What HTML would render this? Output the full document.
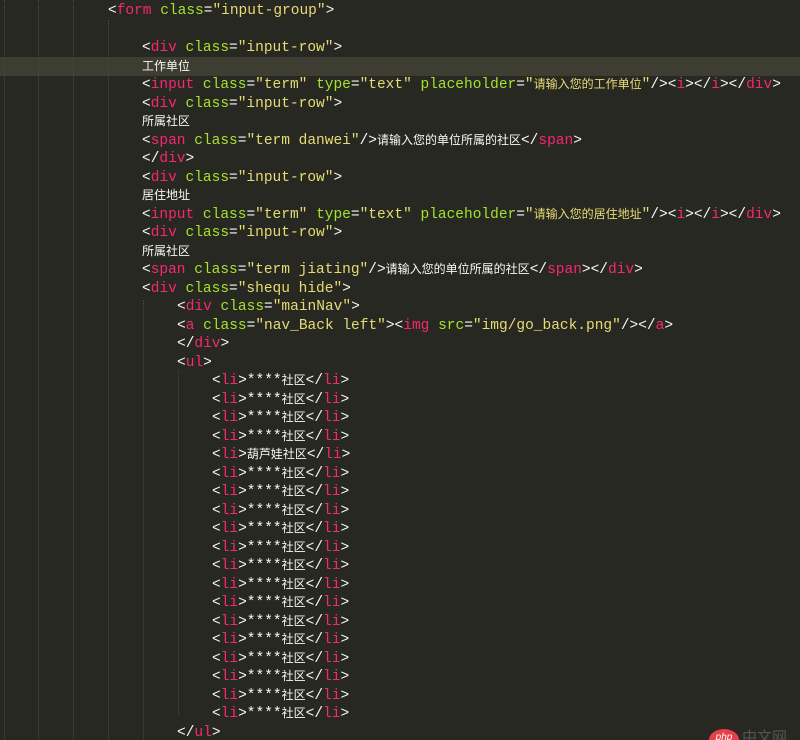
<!DOCTYPE html>
<html style="height:740px;overflow:hidden"><head><meta charset="utf-8"><style>
body{margin:0;width:800px;height:740px;background:#272822;overflow:hidden;position:relative;font-family:"Liberation Mono",monospace;font-size:14.5px;color:#f8f8f2}
.g{position:absolute;top:0;height:740px;border-left:1px dotted #4a4a42}
.hl{position:absolute;left:0;top:57px;width:800px;height:18.5px;background:#3e3d32}
.c{position:absolute;left:0;top:2px;width:800px}
.l{height:18.5px;line-height:18.5px;white-space:pre;position:relative;overflow:hidden}
.t{color:#f92672}.a{color:#a6e22e}.s{color:#e6db74}
.z{font-family:"Noto Sans CJK SC",sans-serif;font-size:12px;line-height:12px;vertical-align:0}
</style></head><body>
<div class="hl"></div>
<div class="g" style="left:4px"></div><div class="g" style="left:38px"></div><div class="g" style="left:73px"></div>
<div class="g" style="left:108px;top:20px;height:720px"></div><div class="g" style="left:143px;top:300px;height:440px"></div><div class="g" style="left:178px;top:370px;height:345px"></div>
<div class="c">
<div class="l" style="padding-left:108px">&lt;<span class="t">form</span> <span class="a">class</span>=<span class="s">"input-group"</span>&gt;</div>
<div class="l"></div>
<div class="l" style="padding-left:142px">&lt;<span class="t">div</span> <span class="a">class</span>=<span class="s">"input-row"</span>&gt;</div>
<div class="l" style="padding-left:142px"><span class="z">工作单位</span></div>
<div class="l" style="padding-left:142px">&lt;<span class="t">input</span> <span class="a">class</span>=<span class="s">"term"</span> <span class="a">type</span>=<span class="s">"text"</span> <span class="a">placeholder</span>=<span class="s">"<span class="z">请输入您的工作单位</span>"</span>/&gt;&lt;<span class="t">i</span>&gt;&lt;/<span class="t">i</span>&gt;&lt;/<span class="t">div</span>&gt;</div>
<div class="l" style="padding-left:142px">&lt;<span class="t">div</span> <span class="a">class</span>=<span class="s">"input-row"</span>&gt;</div>
<div class="l" style="padding-left:142px"><span class="z">所属社区</span></div>
<div class="l" style="padding-left:142px">&lt;<span class="t">span</span> <span class="a">class</span>=<span class="s">"term danwei"</span>/&gt;<span class="z">请输入您的单位所属的社区</span>&lt;/<span class="t">span</span>&gt;</div>
<div class="l" style="padding-left:142px">&lt;/<span class="t">div</span>&gt;</div>
<div class="l" style="padding-left:142px">&lt;<span class="t">div</span> <span class="a">class</span>=<span class="s">"input-row"</span>&gt;</div>
<div class="l" style="padding-left:142px"><span class="z">居住地址</span></div>
<div class="l" style="padding-left:142px">&lt;<span class="t">input</span> <span class="a">class</span>=<span class="s">"term"</span> <span class="a">type</span>=<span class="s">"text"</span> <span class="a">placeholder</span>=<span class="s">"<span class="z">请输入您的居住地址</span>"</span>/&gt;&lt;<span class="t">i</span>&gt;&lt;/<span class="t">i</span>&gt;&lt;/<span class="t">div</span>&gt;</div>
<div class="l" style="padding-left:142px">&lt;<span class="t">div</span> <span class="a">class</span>=<span class="s">"input-row"</span>&gt;</div>
<div class="l" style="padding-left:142px"><span class="z">所属社区</span></div>
<div class="l" style="padding-left:142px">&lt;<span class="t">span</span> <span class="a">class</span>=<span class="s">"term jiating"</span>/&gt;<span class="z">请输入您的单位所属的社区</span>&lt;/<span class="t">span</span>&gt;&lt;/<span class="t">div</span>&gt;</div>
<div class="l" style="padding-left:142px">&lt;<span class="t">div</span> <span class="a">class</span>=<span class="s">"shequ hide"</span>&gt;</div>
<div class="l" style="padding-left:177px">&lt;<span class="t">div</span> <span class="a">class</span>=<span class="s">"mainNav"</span>&gt;</div>
<div class="l" style="padding-left:177px">&lt;<span class="t">a</span> <span class="a">class</span>=<span class="s">"nav_Back left"</span>&gt;&lt;<span class="t">img</span> <span class="a">src</span>=<span class="s">"img/go_back.png"</span>/&gt;&lt;/<span class="t">a</span>&gt;</div>
<div class="l" style="padding-left:177px">&lt;/<span class="t">div</span>&gt;</div>
<div class="l" style="padding-left:177px">&lt;<span class="t">ul</span>&gt;</div>
<div class="l" style="padding-left:212px">&lt;<span class="t">li</span>&gt;****<span class="z">社区</span>&lt;/<span class="t">li</span>&gt;</div>
<div class="l" style="padding-left:212px">&lt;<span class="t">li</span>&gt;****<span class="z">社区</span>&lt;/<span class="t">li</span>&gt;</div>
<div class="l" style="padding-left:212px">&lt;<span class="t">li</span>&gt;****<span class="z">社区</span>&lt;/<span class="t">li</span>&gt;</div>
<div class="l" style="padding-left:212px">&lt;<span class="t">li</span>&gt;****<span class="z">社区</span>&lt;/<span class="t">li</span>&gt;</div>
<div class="l" style="padding-left:212px">&lt;<span class="t">li</span>&gt;<span class="z">葫芦娃社区</span>&lt;/<span class="t">li</span>&gt;</div>
<div class="l" style="padding-left:212px">&lt;<span class="t">li</span>&gt;****<span class="z">社区</span>&lt;/<span class="t">li</span>&gt;</div>
<div class="l" style="padding-left:212px">&lt;<span class="t">li</span>&gt;****<span class="z">社区</span>&lt;/<span class="t">li</span>&gt;</div>
<div class="l" style="padding-left:212px">&lt;<span class="t">li</span>&gt;****<span class="z">社区</span>&lt;/<span class="t">li</span>&gt;</div>
<div class="l" style="padding-left:212px">&lt;<span class="t">li</span>&gt;****<span class="z">社区</span>&lt;/<span class="t">li</span>&gt;</div>
<div class="l" style="padding-left:212px">&lt;<span class="t">li</span>&gt;****<span class="z">社区</span>&lt;/<span class="t">li</span>&gt;</div>
<div class="l" style="padding-left:212px">&lt;<span class="t">li</span>&gt;****<span class="z">社区</span>&lt;/<span class="t">li</span>&gt;</div>
<div class="l" style="padding-left:212px">&lt;<span class="t">li</span>&gt;****<span class="z">社区</span>&lt;/<span class="t">li</span>&gt;</div>
<div class="l" style="padding-left:212px">&lt;<span class="t">li</span>&gt;****<span class="z">社区</span>&lt;/<span class="t">li</span>&gt;</div>
<div class="l" style="padding-left:212px">&lt;<span class="t">li</span>&gt;****<span class="z">社区</span>&lt;/<span class="t">li</span>&gt;</div>
<div class="l" style="padding-left:212px">&lt;<span class="t">li</span>&gt;****<span class="z">社区</span>&lt;/<span class="t">li</span>&gt;</div>
<div class="l" style="padding-left:212px">&lt;<span class="t">li</span>&gt;****<span class="z">社区</span>&lt;/<span class="t">li</span>&gt;</div>
<div class="l" style="padding-left:212px">&lt;<span class="t">li</span>&gt;****<span class="z">社区</span>&lt;/<span class="t">li</span>&gt;</div>
<div class="l" style="padding-left:212px">&lt;<span class="t">li</span>&gt;****<span class="z">社区</span>&lt;/<span class="t">li</span>&gt;</div>
<div class="l" style="padding-left:212px">&lt;<span class="t">li</span>&gt;****<span class="z">社区</span>&lt;/<span class="t">li</span>&gt;</div>
<div class="l" style="padding-left:177px">&lt;/<span class="t">ul</span>&gt;</div>
</div>
<div style="position:absolute;left:709px;top:729px;width:30px;height:22px;border-radius:50%;background:#e8404a;color:#fff;font:italic 10px 'Liberation Sans',sans-serif;text-align:center;line-height:18px">php</div>
<div style="position:absolute;left:742px;top:727px;color:#555;font:15px 'Noto Sans CJK SC',sans-serif;line-height:20px">中文网</div>
</body></html>
